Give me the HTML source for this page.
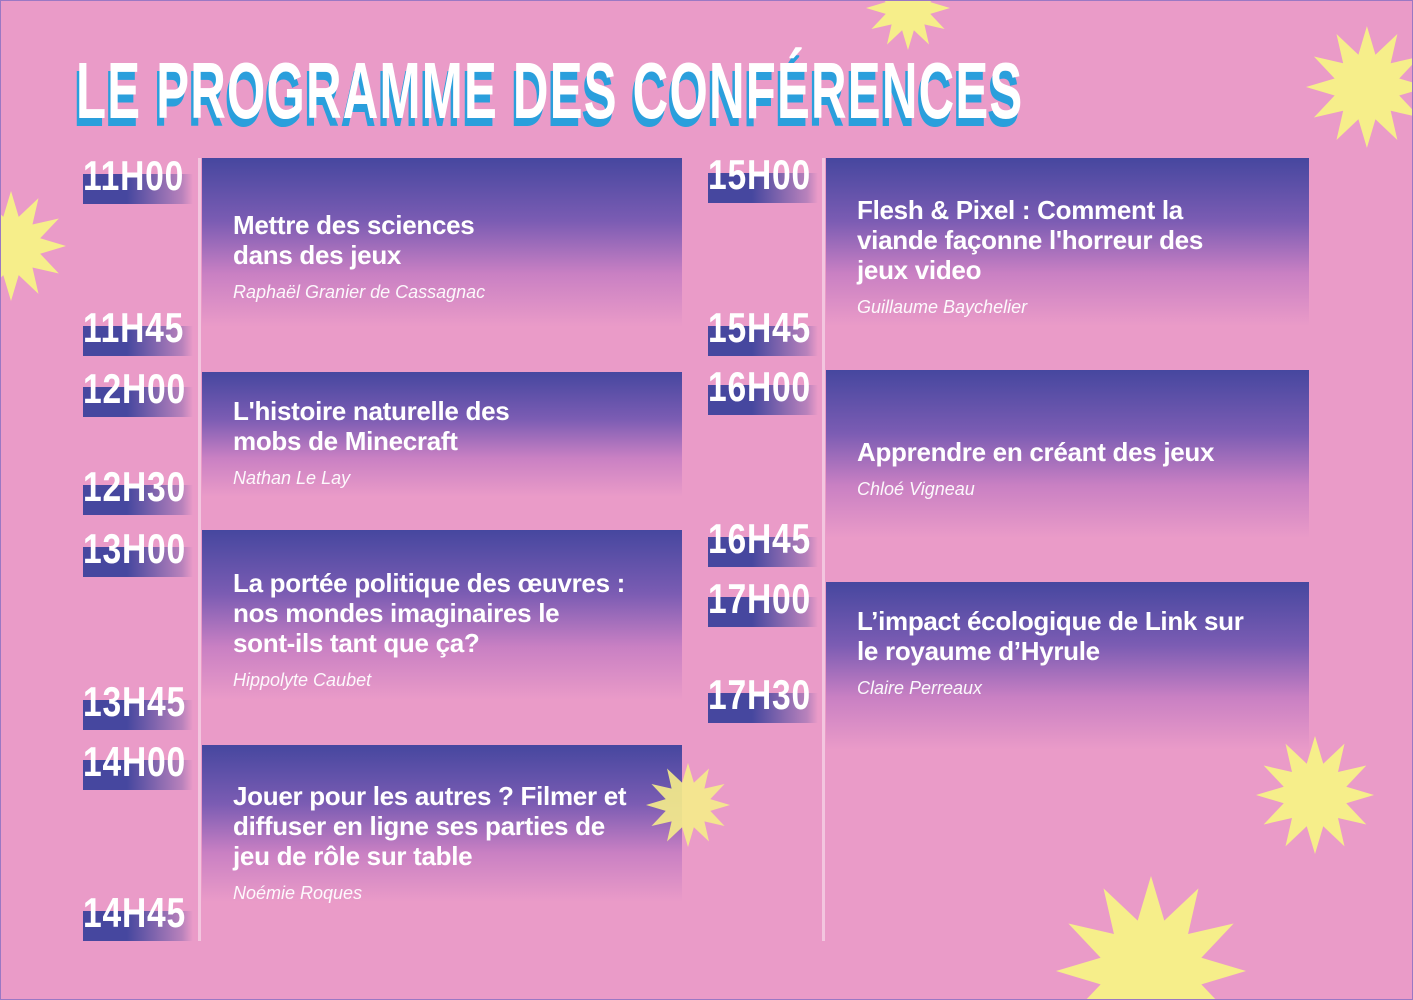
<!DOCTYPE html>
<html><head><meta charset="utf-8"><style>
*{margin:0;padding:0;box-sizing:border-box}
html,body{width:1413px;height:1000px;overflow:hidden}
#w{width:1413px;height:1000px;overflow:hidden;background:#ea9bc8;position:relative;font-family:"Liberation Sans","DejaVu Sans",sans-serif;border:1px solid #9a78c4}
.star{position:absolute;display:block}
.title{position:absolute;left:75px;top:44px;font-weight:bold;font-size:80px;letter-spacing:2px;white-space:nowrap;transform-origin:0 0;transform:scaleX(0.615)}
.title span{position:absolute;left:0;top:0}
.line{position:absolute;width:3px;background:#f3c6df}
.card{position:absolute;background:linear-gradient(180deg,#46479f 0%,#7b5cb3 30%,#c980c3 55%,rgba(234,155,200,0) 80%)}
.card h3{position:absolute;color:#fff;font-size:26px;line-height:30px;font-weight:bold;letter-spacing:-0.3px}
.card p{position:absolute;color:#fff;font-size:18px;font-style:italic;opacity:.95}
.t{position:absolute;width:110px;height:48px}
.t .b{position:absolute;left:0;top:16px;width:110px;height:30px;background:linear-gradient(90deg,#46479f 40%,rgba(70,71,159,0.3) 90%,rgba(70,71,159,0))}
.t .x{position:absolute;left:0;top:-6px;color:#fff;font-weight:bold;font-size:42px;transform-origin:0 0;transform:scaleX(0.8);letter-spacing:1px}
</style></head><body><div id="w">
<svg width="0" height="0" style="position:absolute"><defs><symbol id="s" viewBox="-1 -1 2 2"><polygon fill="#f6ee8a" points="1,0 .53,.14 .87,.5 .39,.39 .5,.87 .14,.53 0,1 -.14,.53 -.5,.87 -.39,.39 -.87,.5 -.53,.14 -1,0 -.53,-.14 -.87,-.5 -.39,-.39 -.5,-.87 -.14,-.53 0,-1 .14,-.53 .5,-.87 .39,-.39 .87,-.5 .53,-.14"/></symbol></defs></svg>
<svg class="star" style="left:865px;top:-35px" width="84" height="84"><use href="#s"/></svg>
<svg class="star" style="left:1305px;top:25px" width="106" height="122" viewBox="-1 -1 1.74 2"><polygon fill="#f6ee8a" points="1,0 .53,.14 .87,.5 .39,.39 .5,.87 .14,.53 0,1 -.14,.53 -.5,.87 -.39,.39 -.87,.5 -.53,.14 -1,0 -.53,-.14 -.87,-.5 -.39,-.39 -.5,-.87 -.14,-.53 0,-1 .14,-.53 .5,-.87 .39,-.39 .87,-.5 .53,-.14"/></svg>
<svg class="star" style="left:-45px;top:190px" width="110" height="110"><use href="#s"/></svg>
<svg class="star" style="left:1255px;top:735px" width="118" height="118"><use href="#s"/></svg>
<svg class="star" style="left:1055px;top:875px" width="190" height="124" viewBox="-1 -1 2 1.305"><polygon fill="#f6ee8a" points="1,0 .53,.14 .87,.5 .39,.39 .5,.87 .14,.53 0,1 -.14,.53 -.5,.87 -.39,.39 -.87,.5 -.53,.14 -1,0 -.53,-.14 -.87,-.5 -.39,-.39 -.5,-.87 -.14,-.53 0,-1 .14,-.53 .5,-.87 .39,-.39 .87,-.5 .53,-.14"/></svg>

<div class="title"><span style="color:#2a9fdc;left:-4px;top:8px">LE PROGRAMME DES CONFÉRENCES</span><span style="color:#fff">LE PROGRAMME DES CONFÉRENCES</span></div>

<div class="line" style="left:197px;top:157px;height:783px"></div>
<div class="line" style="left:821px;top:157px;height:783px"></div>

<div class="card" style="left:201px;top:157px;width:480px;height:211px"><h3 style="left:31px;top:52px">Mettre des sciences<br>dans des jeux</h3><p style="left:31px;top:124px">Raphaël Granier de Cassagnac</p></div>
<div class="card" style="left:201px;top:371px;width:480px;height:156px"><h3 style="left:31px;top:24px">L'histoire naturelle des<br>mobs de Minecraft</h3><p style="left:31px;top:96px">Nathan Le Lay</p></div>
<div class="card" style="left:201px;top:529px;width:480px;height:213px"><h3 style="left:31px;top:38px">La portée politique des œuvres :<br>nos mondes imaginaires le<br>sont-ils tant que ça?</h3><p style="left:31px;top:140px">Hippolyte Caubet</p></div>
<div class="card" style="left:201px;top:744px;width:480px;height:196px"><h3 style="left:31px;top:36px">Jouer pour les autres ? Filmer et<br>diffuser en ligne ses parties de<br>jeu de rôle sur table</h3><p style="left:31px;top:138px">Noémie Roques</p></div>

<div class="card" style="left:825px;top:157px;width:483px;height:210px"><h3 style="left:31px;top:37px">Flesh &amp; Pixel : Comment la<br>viande façonne l'horreur des<br>jeux video</h3><p style="left:31px;top:139px">Guillaume Baychelier</p></div>
<div class="card" style="left:825px;top:369px;width:483px;height:210px"><h3 style="left:31px;top:67px">Apprendre en créant des jeux</h3><p style="left:31px;top:109px">Chloé Vigneau</p></div>
<div class="card" style="left:825px;top:581px;width:483px;height:210px"><h3 style="left:31px;top:24px">L’impact écologique de Link sur<br>le royaume d’Hyrule</h3><p style="left:31px;top:96px">Claire Perreaux</p></div>

<svg class="star" style="left:645px;top:762px;opacity:.9" width="84" height="84"><use href="#s"/></svg>

<div class="t" style="left:82px;top:157px"><div class="b"></div><div class="x">11H00</div></div>
<div class="t" style="left:82px;top:309px"><div class="b"></div><div class="x">11H45</div></div>
<div class="t" style="left:82px;top:370px"><div class="b"></div><div class="x">12H00</div></div>
<div class="t" style="left:82px;top:468px"><div class="b"></div><div class="x">12H30</div></div>
<div class="t" style="left:82px;top:530px"><div class="b"></div><div class="x">13H00</div></div>
<div class="t" style="left:82px;top:683px"><div class="b"></div><div class="x">13H45</div></div>
<div class="t" style="left:82px;top:743px"><div class="b"></div><div class="x">14H00</div></div>
<div class="t" style="left:82px;top:894px"><div class="b"></div><div class="x">14H45</div></div>

<div class="t" style="left:707px;top:156px"><div class="b"></div><div class="x">15H00</div></div>
<div class="t" style="left:707px;top:309px"><div class="b"></div><div class="x">15H45</div></div>
<div class="t" style="left:707px;top:368px"><div class="b"></div><div class="x">16H00</div></div>
<div class="t" style="left:707px;top:520px"><div class="b"></div><div class="x">16H45</div></div>
<div class="t" style="left:707px;top:580px"><div class="b"></div><div class="x">17H00</div></div>
<div class="t" style="left:707px;top:676px"><div class="b"></div><div class="x">17H30</div></div>
</div></body></html>
